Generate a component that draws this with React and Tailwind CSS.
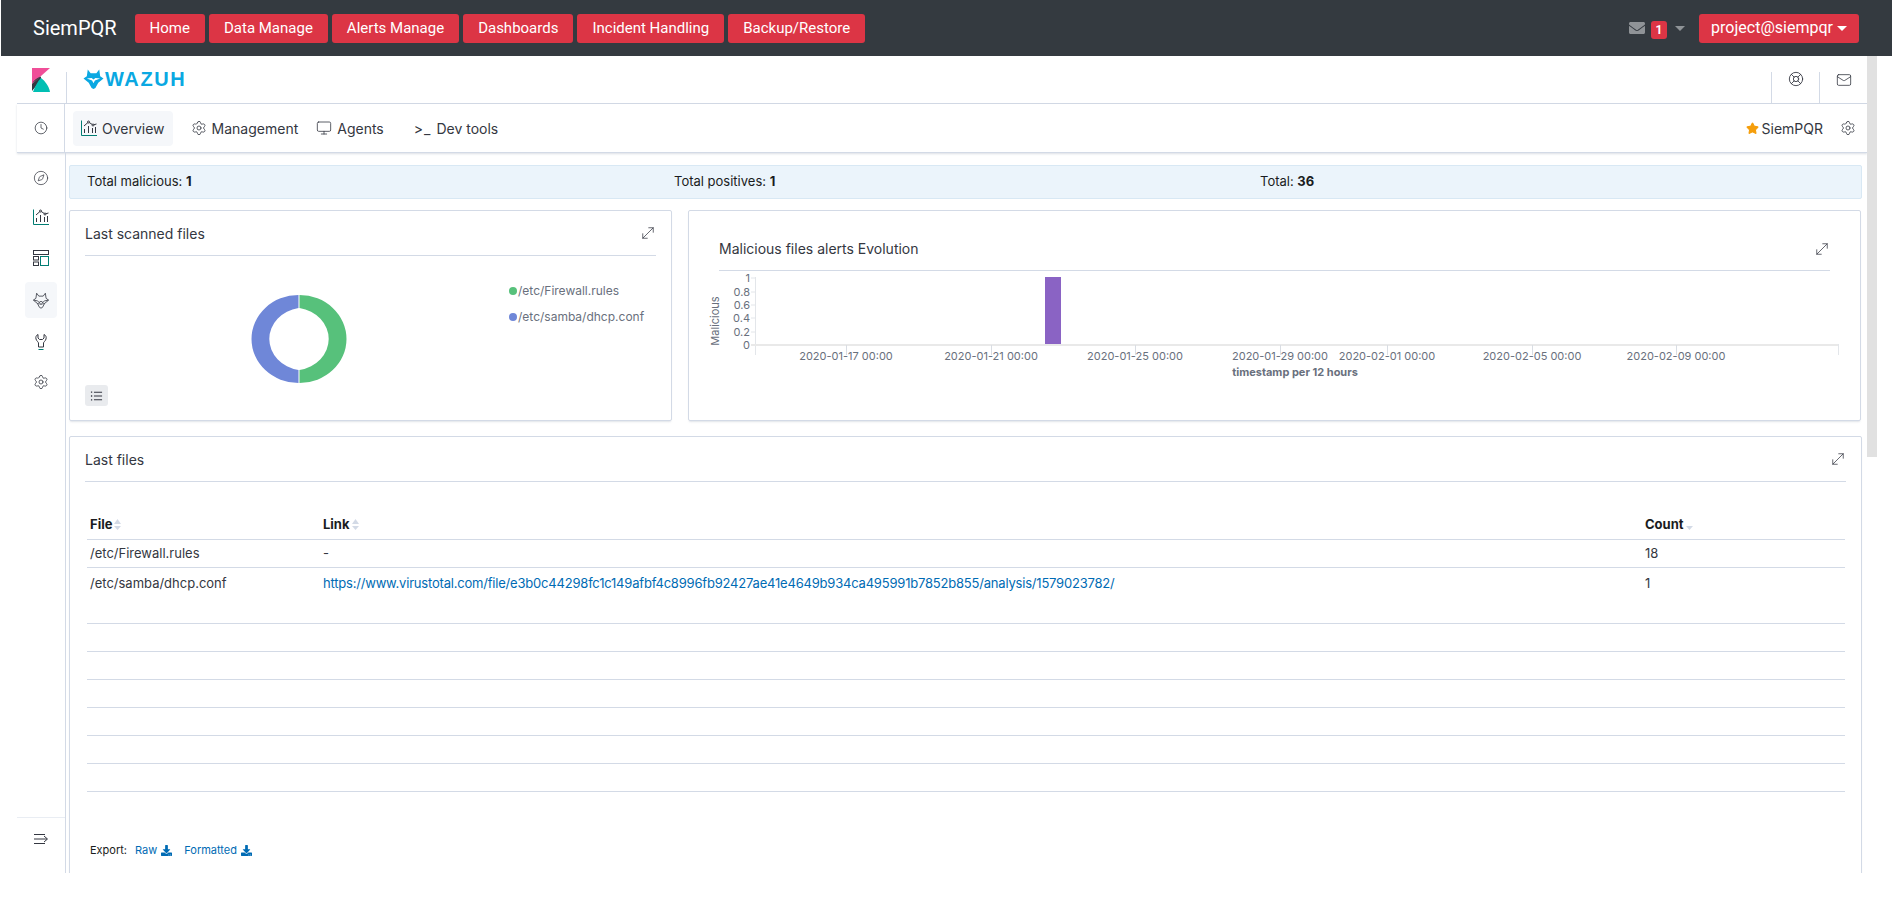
import { Clock, Compass, LifeBuoy, Mail, Monitor, MoveDiagonal, Settings, Star } from "lucide-react";
import { FaDownload, FaEnvelope } from "react-icons/fa";

const menu = ["Home", "Data Manage", "Alerts Manage", "Dashboards", "Incident Handling", "Backup/Restore"];
const ticks = [
  [90, "2020-01-17 00:00"],
  [235, "2020-01-21 00:00"],
  [379, "2020-01-25 00:00"],
  [524, "2020-01-29 00:00"],
  [631, "2020-02-01 00:00"],
  [776, "2020-02-05 00:00"],
  [920, "2020-02-09 00:00"],
];
const yTicks = [
  [7, "1"],
  [21, "0.8"],
  [34, "0.6"],
  [47, "0.4"],
  [61, "0.2"],
  [74, "0"],
];
const url =
  "https://www.virustotal.com/file/e3b0c44298fc1c149afbf4c8996fb92427ae41e4649b934ca495991b7852b855/analysis/1579023782/";

function KibanaLogo() {
  return (
    <svg width="18" height="24" viewBox="0 0 18 24">
      <path d="M0 0H18L0 16Z" fill="#f04e98" />
      <path d="M0 16L8.5 8.5C5 10 2 12 0 16Z M0 15.5L8.5 8.5C11 10.5 5 17 0 23Z" fill="#343741" />
      <path d="M1 24H18C17 18 13 13 9 10C6 13 3 18 1 24Z" fill="#00bfb3" />
    </svg>
  );
}

function WolfHead({ className, solid }) {
  return (
    <svg className={className} viewBox="0 0 22 22" fill="none" stroke="currentColor" strokeWidth={solid ? 0 : 1.1}>
      <path
        d="M5 1L8 5H14L17 1L18 8L21.5 10.5L16 15L13 20.5L11 21.5L9 20.5L6 15L0.5 10.5L4 8Z"
        fill={solid ? "currentColor" : "none"}
        strokeLinejoin="round"
      />
      {solid ? (
        <path d="M4 10.5L9.5 12.5L11 15.5L12.5 12.5L18 10.5L13 10L11 11.5L9 10Z" fill="#fff" />
      ) : (
        <path d="M1 10.5L6 11.5L9 14L11 17L13 14L16 11.5L21 10.5M8 14L11 12L14 14M6 15L9 16M16 15L13 16" strokeWidth="1.1" />
      )}
    </svg>
  );
}

function ChartIcon({ className }) {
  return (
    <svg className={className} viewBox="0 0 16 16" fill="none" stroke="#343741" strokeWidth="1">
      <path d="M0.5 0.5V15.5H16" stroke="#017d73" />
      <path d="M3 6L7.5 2L12 5L15.5 4" />
      <circle cx="7.5" cy="2" r="1" fill="#fff" />
      <circle cx="12" cy="5" r="1" fill="#fff" />
      <path d="M3.5 9V13M7.5 6V13M11.5 8V13M14.5 7V13" />
    </svg>
  );
}

function DashIcon({ className }) {
  return (
    <svg className={className} viewBox="0 0 16 16" fill="none" strokeWidth="1">
      <rect x="0.5" y="0.5" width="15" height="4" stroke="#343741" />
      <rect x="0.5" y="6.5" width="5" height="3.5" stroke="#343741" />
      <rect x="0.5" y="12" width="5" height="3.5" stroke="#343741" />
      <rect x="7.5" y="6.5" width="8" height="9" stroke="#017d73" />
    </svg>
  );
}

function WrenchIcon({ className }) {
  return (
    <svg className={className} viewBox="0 0 16 16" fill="none" stroke="#343741" strokeWidth="1">
      <path d="M5 0.5C3 1.5 2.5 3 3 5C3.5 7 5.5 8 5.5 9V13H10.5V9C10.5 8 12.5 7 13 5C13.5 3 13 1.5 11 0.5V4L9.5 5.5H6.5L5 4Z" strokeLinejoin="round" />
      <path d="M5.5 15.5H10.5" stroke="#017d73" />
    </svg>
  );
}

function CollapseIcon({ className }) {
  return (
    <svg className={className} viewBox="0 0 16 14" fill="none" stroke="#343741" strokeWidth="1">
      <path d="M1 2.5H12M1 7H14M1 11.5H12M11 4L14.5 7L11 10" />
    </svg>
  );
}

function ListIcon({ className }) {
  return (
    <svg className={className} viewBox="0 0 14 14" fill="none" stroke="#343741" strokeWidth="1.2">
      <path d="M4 2.5H13.5M4 7H13.5M4 11.5H13.5" />
      <path d="M0.5 2.5H2M0.5 7H2M0.5 11.5H2" strokeWidth="1.6" />
    </svg>
  );
}

function SortArrows({ down }) {
  return (
    <svg className="ml-[2px] inline-block" width="7" height="13" viewBox="0 0 7 13">
      {!down && <path d="M3.5 1L7 6H0Z" fill="#d3dae6" />}
      <path d="M0 8H7L3.5 12Z" fill="#d3dae6" />
    </svg>
  );
}

function Panel({ title, className, titleClass, children }) {
  return (
    <div className={"rounded-[2px] border border-[#d3dae6] bg-white shadow-[0_2px_2px_-1px_rgba(152,162,179,0.3)] " + className}>
      <div className={"mx-[15px] flex items-center justify-between border-b border-[#d3dae6] " + titleClass}>
        <span className="text-[14px] text-[#343741]">{title}</span>
        <MoveDiagonal className="mr-[-1px] h-[18px] w-[18px] text-[#343741]" strokeWidth={1} />
      </div>
      {children}
    </div>
  );
}

function Donut() {
  return (
    <svg width="96" height="90" viewBox="0 0 96 90">
      <path d="M48.5 1A47 44 0 0 1 48.5 89V76A35.5 31.5 0 0 0 48.5 14Z" fill="#57c17b" />
      <path d="M47.5 1A47 44 0 0 0 47.5 89V76A35.5 31.5 0 0 1 47.5 14Z" fill="#6f87d8" />
    </svg>
  );
}

function EvolutionChart() {
  return (
    <svg className="absolute left-[1px] top-[60px]" width="1170" height="120" viewBox="0 0 1170 120">
      <text
        x="0"
        y="0"
        transform="translate(29 50) rotate(-90)"
        textAnchor="middle"
        fontSize="11"
        fill="#69707d"
      >
        Malicious
      </text>
      {yTicks.map(([y, label]) => (
        <g key={label}>
          <text x="60" y={y + 4} textAnchor="end" fontSize="11" fill="#69707d">
            {label}
          </text>
          <path d={`M61 ${y}H66`} stroke="#e3e6ea" />
        </g>
      ))}
      <path d="M65.5 6V84" stroke="#e3e6ea" />
      <rect x="355" y="6" width="16" height="68" fill="#8a63c4" />
      <rect x="61" y="73" width="1088" height="2" fill="#e9e9e9" />
      <path d="M1148.5 73V84" stroke="#e3e6ea" />
      {ticks.map(([x, label]) => (
        <g key={label}>
          <path d={`M${x + 66.5} 74V84`} stroke="#d9dde3" />
          <text x={x + 66} y={89} textAnchor="middle" fontSize="11" fill="#69707d">
            {label}
          </text>
        </g>
      ))}
      <text x="605" y="105" textAnchor="middle" fontSize="11" fontWeight="700" fill="#69707d">
        timestamp per 12 hours
      </text>
    </svg>
  );
}

function NavItem({ icon, label, active }) {
  return (
    <div className={"flex h-[35px] items-center rounded-[4px] " + (active ? "bg-[#f5f7fa] px-[8px]" : "")}>
      {icon}
      <span className="ml-[5px] text-[14px] text-[#343741]">{label}</span>
    </div>
  );
}

export default function App() {
  return (
    <div className="h-[906px] w-[1892px] overflow-hidden bg-white font-['Inter',sans-serif] text-[#343741]">
      {/* top bar */}
      <nav className="ml-[1px] flex h-[56px] items-center bg-[#343a40] font-['Roboto',sans-serif]">
        <span className="ml-[32px] text-[20px] text-white">SiemPQR</span>
        <div className="ml-[18px] flex gap-[4px]">
          {menu.map((m) => (
            <button key={m} className="h-[29px] rounded-[3px] bg-[#dc3545] px-[15px] text-[15px] text-white">
              {m}
            </button>
          ))}
        </div>
        <div className="ml-auto mr-[33px] flex items-center">
          <FaEnvelope className="h-[16px] w-[16px] text-[#8f9397]" />
          <span className="ml-[6px] mt-[3px] flex h-[18px] w-[16px] items-center justify-center rounded-[3px] bg-[#dc3545] text-[12px] font-bold text-white">
            1
          </span>
          <span className="ml-[8px] h-0 w-0 border-x-[5px] border-t-[5px] border-x-transparent border-t-[#8f9397]" />
          <button className="ml-[14px] flex h-[29px] w-[160px] items-center justify-center rounded-[3px] bg-[#dc3545] text-[16px] text-white">
            project@siempqr
            <span className="ml-[4px] h-0 w-0 border-x-[5px] border-t-[5px] border-x-transparent border-t-white" />
          </button>
        </div>
      </nav>

      <div className="flex items-start">
        {/* kibana window */}
        <div className="ml-[17px] flex h-[817px] w-[1850px] flex-col">
          <header className="flex h-[48px] shrink-0 items-stretch border-b border-[#d3dae6]">
            <div className="flex w-[49px] justify-center pt-[12px] pr-[1px]">
              <KibanaLogo />
            </div>
            <div className="mt-[16px] w-px bg-[#d3dae6]" />
            <div className="ml-[16px] flex items-center gap-[1px] pb-[1px] text-[#0aa8e2]">
              <WolfHead className="h-[22px] w-[21px]" solid />
              <span className="font-['Liberation_Sans',sans-serif] text-[20px] font-bold tracking-[1.6px]">WAZUH</span>
            </div>
            <div className="ml-auto flex">
              <div className="mt-[16px] flex w-[48px] justify-center border-l border-[#d3dae6]">
                <LifeBuoy className="-mt-[1px] h-[16px] w-[16px]" strokeWidth={1.3} />
              </div>
              <div className="mt-[16px] flex w-[48px] justify-center border-l border-[#d3dae6]">
                <Mail className="h-[16px] w-[16px]" strokeWidth={1.2} />
              </div>
            </div>
          </header>

          <div className="flex h-[49px] shrink-0 items-stretch border-b border-[#d3dae6] shadow-[0_1px_2px_rgba(152,162,179,0.35)]">
            <div className="flex w-[48px] items-center justify-center border-r border-[#d3dae6]">
              <Clock className="h-[14px] w-[14px]" strokeWidth={1.3} />
            </div>
            <div className="ml-[8px] flex items-center gap-[18px]">
              <NavItem active label="Overview" icon={<ChartIcon className="h-[16px] w-[16px]" />} />
              <NavItem label="Management" icon={<Settings className="h-[16px] w-[16px]" strokeWidth={1.2} />} />
              <NavItem label="Agents" icon={<Monitor className="h-[16px] w-[16px]" strokeWidth={1.2} />} />
              <div className="ml-[12px] flex items-center text-[14px]">
                <span className="mr-[5px] tracking-[1px]">&gt;_</span>
                Dev tools
              </div>
            </div>
            <div className="ml-auto flex items-center pr-[11px]">
              <Star className="h-[13px] w-[13px] fill-[#f59e0b] text-[#f59e0b]" />
              <span className="ml-[3px] text-[14px]">SiemPQR</span>
              <Settings className="ml-[17px] h-[16px] w-[16px]" strokeWidth={1.2} />
            </div>
          </div>

          <div className="flex min-h-0 flex-1">
            {/* side rail */}
            <aside className="flex w-[49px] shrink-0 flex-col items-center border-r border-[#d3dae6]">
              <Compass className="mt-[17px] h-[16px] w-[16px]" strokeWidth={1.1} />
              <ChartIcon className="mt-[23px] h-[16px] w-[16px]" />
              <DashIcon className="mt-[25px] h-[16px] w-[16px]" />
              <div className="mt-[16px] flex h-[36px] w-[32px] items-center justify-center rounded-[4px] bg-[#f5f7fa]">
                <WolfHead className="h-[19px] w-[16px]" />
              </div>
              <WrenchIcon className="mt-[16px] h-[16px] w-[16px]" />
              <Settings className="mt-[24px] h-[16px] w-[16px]" strokeWidth={1.2} />
              <div className="mt-auto flex h-[56px] w-full justify-center border-t border-[#e9edf3] pt-[14px]">
                <CollapseIcon className="h-[14px] w-[16px]" />
              </div>
            </aside>

            <main className="min-w-0 flex-1 overflow-hidden pl-[3px] pr-[5px] pt-[12px]">
              <div className="flex h-[34px] items-center rounded-[2px] border border-[#d8e8f4] bg-[#ebf4fb] pl-[17px] text-[13px] text-[#1a1c21]">
                <span className="w-[587px]">
                  Total malicious: <b>1</b>
                </span>
                <span className="w-[586px]">
                  Total positives: <b>1</b>
                </span>
                <span>
                  Total: <b>36</b>
                </span>
              </div>

              <div className="mt-[11px] flex gap-[16px]">
                <Panel title="Last scanned files" className="relative h-[211px] w-[603px]" titleClass="h-[45px]">
                  <div className="flex h-[165px]">
                    <div className="ml-[181px] mt-[38px]">
                      <Donut />
                    </div>
                    <ul className="ml-[162px] mt-[26px] flex flex-col gap-[8px] text-[12px] text-[#69707d]">
                      <li className="flex items-center gap-[1px]">
                        <span className="h-[8px] w-[8px] rounded-full bg-[#57c17b]" />
                        /etc/Firewall.rules
                      </li>
                      <li className="flex items-center gap-[1px]">
                        <span className="h-[8px] w-[8px] rounded-full bg-[#6f87d8]" />
                        /etc/samba/dhcp.conf
                      </li>
                    </ul>
                  </div>
                  <button className="absolute bottom-[14px] left-[15px] flex h-[21px] w-[23px] items-center justify-center rounded-[3px] bg-[#e9ebee]">
                    <ListIcon className="h-[12px] w-[13px]" />
                  </button>
                </Panel>
                <Panel title="Malicious files alerts Evolution" className="relative h-[211px] w-[1173px] [&>div:first-child]:mx-[30px]" titleClass="h-[60px] pt-[16px]">
                  <EvolutionChart />
                </Panel>
              </div>

              <Panel title="Last files" className="mt-[15px] h-[500px]" titleClass="h-[45px]">
                <div className="ml-[17px] mr-[16px] mt-[30px] text-[13px] text-[#343741]">
                  <div className="flex h-[28px] items-center border-b border-[#d3dae6] pb-[2px] font-bold text-[#1a1c21]">
                    <span className="flex w-[236px] items-center pl-[3px]">
                      File <SortArrows />
                    </span>
                    <span className="flex w-[1322px] items-center">
                      Link <SortArrows />
                    </span>
                    <span className="flex items-center">
                      Count <SortArrows down />
                    </span>
                  </div>
                  <div className="flex h-[28px] items-center border-b border-[#d3dae6]">
                    <span className="w-[236px] pl-[3px]">/etc/Firewall.rules</span>
                    <span className="w-[1322px]">-</span>
                    <span>18</span>
                  </div>
                  <div className="flex h-[56px] items-start border-b border-[#d3dae6] pt-[6px]">
                    <span className="w-[236px] pl-[3px]">/etc/samba/dhcp.conf</span>
                    <a className="w-[1322px] tracking-[-0.2px] text-[#006bb4]">{url}</a>
                    <span>1</span>
                  </div>
                  {[0, 1, 2, 3, 4, 5].map((i) => (
                    <div key={i} className="h-[28px] border-b border-[#d3dae6]" />
                  ))}
                </div>
                <div className="ml-[20px] mt-[50px] flex items-center text-[11px] text-[#1a1c21]">
                  Export:
                  <a className="ml-[8px] flex items-center gap-[4px] text-[#006bb4]">
                    Raw <FaDownload className="h-[11px] w-[11px]" />
                  </a>
                  <a className="ml-[12px] flex items-center gap-[4px] text-[#006bb4]">
                    Formatted <FaDownload className="h-[11px] w-[11px]" />
                  </a>
                </div>
              </Panel>
            </main>
          </div>
        </div>
        {/* scrollbar */}
        <div className="h-[401px] w-[10px] bg-[#e1e1e1]" />
      </div>
    </div>
  );
}
